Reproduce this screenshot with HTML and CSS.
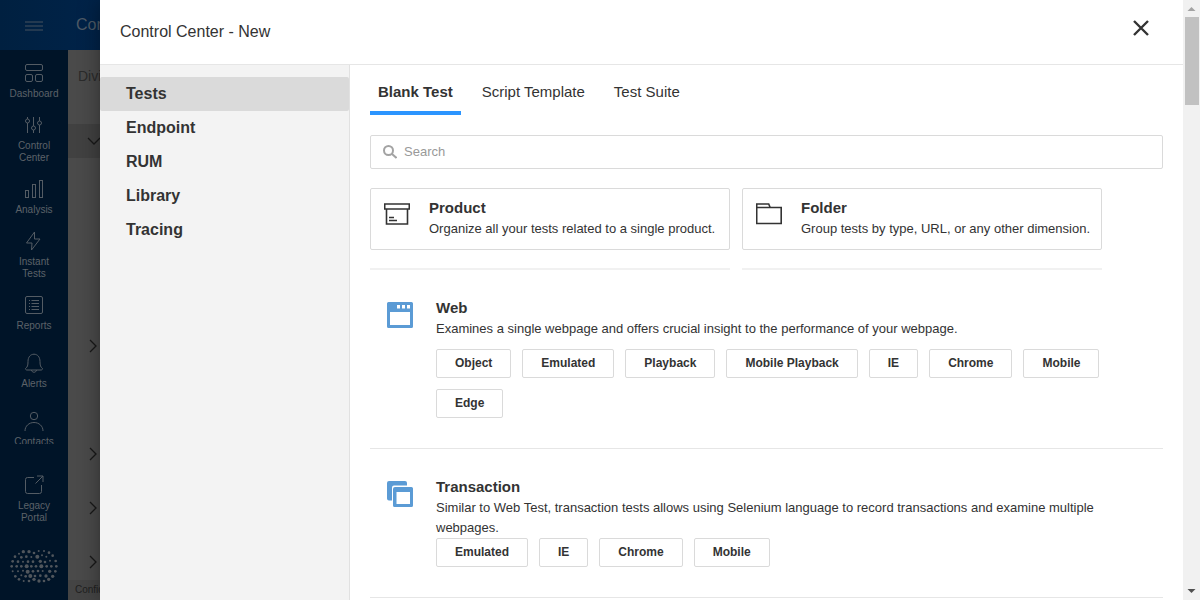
FILE: index.html
```
<!DOCTYPE html>
<html lang="en">
<head>
<meta charset="utf-8">
<title>Control Center - New</title>
<link rel="stylesheet" href="styles.css">
</head>
<body>
<div class="app">
  <header class="topbar">
    <button class="menu" type="button" aria-label="Menu">
      <svg width="18" height="12" viewBox="0 0 18 12"><path d="M0 2h18M0 6h18M0 10h18" /></svg>
    </button>
    <span class="topbar-title">Control Center</span>
  </header>
  <div class="app-body">
    <nav class="rail">
      <div class="rail-list">
        <a class="rail-item" href="#"><svg width="20" height="20" viewBox="0 0 20 20"><rect x="1.500" y="1.500" width="17" height="6" rx="1.500"/><rect x="1.500" y="11.500" width="7" height="7" rx="1.500"/><rect x="11.500" y="11.500" width="7" height="7" rx="1.500"/></svg><span>Dashboard</span></a>
        <a class="rail-item" href="#"><svg width="20" height="20" viewBox="0 0 20 20"><path d="M3.500 2v2M3.500 8v10M9.500 2v9M9.500 15v3M15.500 2v4M15.500 10v8"/><circle cx="3.500" cy="6" r="2"/><circle cx="9.500" cy="13" r="2"/><circle cx="15.500" cy="8" r="2"/></svg><span>Control<br>Center</span></a>
        <a class="rail-item" href="#"><svg width="20" height="20" viewBox="0 0 20 20"><rect x="1.500" y="11.500" width="3" height="7"/><rect x="8.500" y="5.500" width="3" height="13"/><rect x="15.500" y="1.500" width="3" height="17"/></svg><span>Analysis</span></a>
        <a class="rail-item" href="#"><svg width="20" height="20" viewBox="0 0 20 20"><path d="M10.500 1 2.500 12H8L7.500 19 16 8H10.500Z"/></svg><span>Instant<br>Tests</span></a>
        <a class="rail-item rail-item-tall" href="#"><svg width="20" height="20" viewBox="0 0 20 20"><rect x="1.500" y="1.500" width="17" height="17" rx="1.500"/><path d="M5 5.500h1M7.500 5.500H15M5 8.500h1M7.500 8.500H15M5 11.500h1M7.500 11.500H15M5 14.500h1M7.500 14.500H15"/></svg><span>Reports</span></a>
        <a class="rail-item rail-item-tall" href="#"><svg width="20" height="20" viewBox="0 0 20 20"><path d="M1.500 15.500c2-1.500 2.500-3 2.500-7C4 4 6.500 1.200 10 1.200S16 4 16 8.500c0 4 .5 5.500 2.500 7 0 1-.5 1.500-1.500 1.500H3c-1 0-1.500-.5-1.500-1.500ZM7.500 17c.3 3 4.700 3 5 0"/></svg><span>Alerts</span></a>
        <a class="rail-item" href="#"><svg width="20" height="20" viewBox="0 0 20 20"><circle cx="10" cy="5" r="3.700"/><path d="M1 20c0-5 4-8.500 9-8.500s9 3.500 9 8.500"/></svg><span>Contacts</span></a>
      </div>
      <a class="rail-item rail-legacy" href="#"><svg width="20" height="20" viewBox="0 0 20 20"><path d="M10 2.500H3.500a2 2 0 0 0-2 2v12a2 2 0 0 0 2 2h12a2 2 0 0 0 2-2V10M11.500 8.500 19 1M13 1h6v6"/></svg><span>Legacy<br>Portal</span></a>
      <svg class="rail-logo" width="48" height="34" viewBox="30 326 144 102">
        <circle cx="70" cy="334" r="5"/><circle cx="87" cy="334" r="5"/><circle cx="102" cy="338" r="4"/><circle cx="116" cy="332" r="3"/><circle cx="132" cy="332" r="3"/><circle cx="147" cy="337" r="4"/>
        <circle cx="57" cy="340" r="3"/><circle cx="45" cy="349" r="4"/><circle cx="64" cy="351" r="4"/><circle cx="79" cy="349" r="4"/><circle cx="94" cy="350" r="3"/><circle cx="112" cy="349" r="6"/><circle cx="126" cy="345" r="3"/><circle cx="139" cy="349" r="3"/><circle cx="158" cy="346" r="4"/>
        <circle cx="38" cy="363" r="4"/><circle cx="54" cy="364" r="4"/><circle cx="69" cy="364" r="3"/><circle cx="84" cy="364" r="4"/><circle cx="99" cy="364" r="4"/><circle cx="121" cy="363" r="5"/><circle cx="135" cy="365" r="4"/><circle cx="150" cy="361" r="3"/><circle cx="167" cy="362" r="4"/>
        <circle cx="35" cy="378" r="4"/><circle cx="50" cy="378" r="4"/><circle cx="64" cy="378" r="4"/><circle cx="80" cy="378" r="6"/><circle cx="94" cy="378" r="4"/><circle cx="108" cy="378" r="4"/><circle cx="124" cy="378" r="6"/><circle cx="140" cy="378" r="4"/><circle cx="154" cy="378" r="4"/><circle cx="169" cy="378" r="4"/>
        <circle cx="38" cy="393" r="3"/><circle cx="54" cy="393" r="3"/><circle cx="69" cy="391" r="3"/><circle cx="83" cy="394" r="6"/><circle cx="99" cy="393" r="4"/><circle cx="114" cy="392" r="4"/><circle cx="128" cy="392" r="3"/><circle cx="149" cy="393" r="5"/><circle cx="166" cy="393" r="4"/>
        <circle cx="46" cy="408" r="4"/><circle cx="64" cy="405" r="3"/><circle cx="77" cy="408" r="4"/><circle cx="91" cy="407" r="6"/><circle cx="105" cy="407" r="4"/><circle cx="121" cy="406" r="4"/><circle cx="138" cy="407" r="5"/><circle cx="158" cy="408" r="5"/>
        <circle cx="57" cy="417" r="4"/><circle cx="71" cy="422" r="3"/><circle cx="87" cy="422" r="4"/><circle cx="102" cy="417" r="5"/><circle cx="117" cy="422" r="5"/><circle cx="132" cy="422" r="4"/><circle cx="146" cy="417" r="5"/>
      </svg>
    </nav>
    <main class="back">
      <div class="back-label">Division</div>
      <div class="back-strip"><svg width="14" height="8" viewBox="0 0 14 8"><path d="m1 1 6 6 6-6"/></svg></div>
      <div class="back-rows">
        <div class="back-row"><svg width="8" height="14" viewBox="0 0 8 14"><path d="m1 1 6 6-6 6"/></svg></div>
        <div class="back-row"></div>
        <div class="back-row"><svg width="8" height="14" viewBox="0 0 8 14"><path d="m1 1 6 6-6 6"/></svg></div>
        <div class="back-row"><svg width="8" height="14" viewBox="0 0 8 14"><path d="m1 1 6 6-6 6"/></svg></div>
        <div class="back-row"><svg width="8" height="14" viewBox="0 0 8 14"><path d="m1 1 6 6-6 6"/></svg></div>
      </div>
      <div class="back-footer">Confidential</div>
    </main>
  </div>
</div>

<section class="drawer" role="dialog" aria-labelledby="drawer-title">
  <div class="drawer-main">
    <header class="drawer-head">
      <h1 id="drawer-title">Control Center - New</h1>
      <button class="close" type="button" aria-label="Close"><svg width="18" height="18" viewBox="0 0 18 18"><path d="m2 2 14 14M16 2 2 16"/></svg></button>
    </header>
    <div class="drawer-body">
      <nav class="side">
        <a class="side-link side-link-active" href="#">Tests</a>
        <a class="side-link" href="#">Endpoint</a>
        <a class="side-link" href="#">RUM</a>
        <a class="side-link" href="#">Library</a>
        <a class="side-link" href="#">Tracing</a>
      </nav>
      <div class="content">
        <div class="tabs" role="tablist">
          <button class="tab tab-active" type="button" role="tab" aria-selected="true">Blank Test</button>
          <button class="tab" type="button" role="tab">Script Template</button>
          <button class="tab" type="button" role="tab">Test Suite</button>
        </div>
        <label class="search">
          <svg width="14" height="14" viewBox="0 0 14 14"><circle cx="5.500" cy="5.500" r="4.500"/><path d="m9 9 4.500 4"/></svg>
          <input type="text" placeholder="Search" aria-label="Search">
        </label>
        <div class="groups">
          <div class="group">
            <a class="card" href="#">
              <svg width="26" height="22" viewBox="0 0 26 22"><path d="M.7 1h24.600v5H.7ZM2.500 6v15h21V6M5 14.500h5M5 17.500h8"/></svg>
              <div><h2>Product</h2><p>Organize all your tests related to a single product.</p></div>
            </a>
          </div>
          <div class="group">
            <a class="card" href="#">
              <svg width="26" height="22" viewBox="0 0 26 22"><path d="M.7 20.500V1h12l1.500 3.500h11v16ZM.7 4.500h13.500"/></svg>
              <div><h2>Folder</h2><p>Group tests by type, URL, or any other dimension.</p></div>
            </a>
          </div>
        </div>
        <section class="type">
          <svg class="type-icon" width="26" height="26" viewBox="0 0 26 26"><path fill-rule="evenodd" d="M1.500 0h23A1.500 1.500 0 0 1 26 1.500v23a1.500 1.500 0 0 1-1.500 1.500h-23A1.500 1.500 0 0 1 0 24.500v-23A1.500 1.500 0 0 1 1.500 0ZM3 10v13h20V10ZM10 3v3.500h3V3ZM15 3v3.500h3V3ZM20 3v3.500h3V3Z"/></svg>
          <div class="type-text">
            <h2>Web</h2>
            <p>Examines a single webpage and offers crucial insight to the performance of your webpage.</p>
            <div class="chips">
              <button class="chip" type="button">Object</button>
              <button class="chip" type="button">Emulated</button>
              <button class="chip" type="button">Playback</button>
              <button class="chip" type="button">Mobile Playback</button>
              <button class="chip" type="button">IE</button>
              <button class="chip" type="button">Chrome</button>
              <button class="chip" type="button">Mobile</button>
              <button class="chip" type="button">Edge</button>
            </div>
          </div>
        </section>
        <section class="type">
          <svg class="type-icon" width="26" height="26" viewBox="0 0 26 26"><path d="M2 0h16a2 2 0 0 1 2 2v2.500H7a2 2 0 0 0-2 2V19.500H2a2 2 0 0 1-2-2V2a2 2 0 0 1 2-2Z"/><path fill-rule="evenodd" d="M8 6h16.500A1.500 1.500 0 0 1 26 7.500v17a1.500 1.500 0 0 1-1.500 1.500h-17A1.500 1.500 0 0 1 6 24.500V8a2 2 0 0 1 2-2ZM9.500 11v12H23V11Z"/></svg>
          <div class="type-text">
            <h2>Transaction</h2>
            <p>Similar to Web Test, transaction tests allows using Selenium language to record transactions and examine multiple webpages.</p>
            <div class="chips">
              <button class="chip" type="button">Emulated</button>
              <button class="chip" type="button">IE</button>
              <button class="chip" type="button">Chrome</button>
              <button class="chip" type="button">Mobile</button>
            </div>
          </div>
        </section>
      </div>
    </div>
  </div>
  <div class="scrollbar" aria-hidden="true">
    <svg class="scroll-up" width="17" height="17" viewBox="0 0 17 17"><path d="M4.500 11h8l-4-4Z"/></svg>
    <div class="scroll-track"><div class="scroll-thumb"></div></div>
    <svg class="scroll-down" width="17" height="17" viewBox="0 0 17 17"><path d="M4.500 6h8l-4 4Z"/></svg>
  </div>
</section>
</body>
</html>
```
FILE: styles.css
```
* { box-sizing: border-box; }
body {
  margin: 0;
  height: 100vh;
  overflow: hidden;
  font-family: "Liberation Sans", Arial, sans-serif;
  color: #333;
}
h1, h2, p { margin: 0; }
a { color: inherit; text-decoration: none; }
button { font-family: inherit; color: inherit; cursor: pointer; }
svg { display: block; flex: none; }

/* Dimmed application behind the drawer */
.app { display: flex; flex-direction: column; height: 100vh; }
.topbar {
  display: flex;
  align-items: center;
  height: 50px;
  flex: none;
  background: linear-gradient(90deg, #002040, #002349 100px);
}
.menu {
  display: flex;
  justify-content: center;
  width: 68px;
  padding: 2px 0 0;
  border: 0;
  background: none;
}
.menu svg { stroke: #46525e; fill: none; }
.topbar-title { width: 24px; margin-left: 8px; overflow: hidden; white-space: nowrap; font-size: 16px; color: #4e5a66; }
.app-body { display: flex; flex: 1; min-height: 0; }
.rail {
  display: flex;
  flex-direction: column;
  width: 68px;
  flex: none;
  background: #001428;
  color: #5c6268;
  font-size: 10px;
  line-height: 12px;
  text-align: center;
}
.rail-list {
  display: flex;
  flex-direction: column;
  height: 394px;
  padding-top: 13px;
  overflow: hidden;
}
.rail-item {
  display: flex;
  flex-direction: column;
  align-items: center;
  flex: none;
  gap: 5px;
  padding-bottom: 15px;
}
.rail-item-tall { padding-bottom: 21px; }
.rail-item svg { fill: none; stroke: #545c64; stroke-width: 1; }
.rail-legacy { margin-top: auto; }
.rail-logo { margin: 10px auto 17px; fill: #50565c; }
.back {
  position: relative;
  display: flex;
  flex-direction: column;
  flex: 1;
  overflow: hidden;
  background: #4a4a4a;
}
.back-label { padding: 18px 10px; font-size: 14px; line-height: 16px; color: #2b2b2b; }
.back-strip { display: flex; align-items: center; height: 34px; margin-top: 22px; padding-left: 19px; background: #414141; }
.back svg { fill: none; stroke: #181818; stroke-width: 1.3; }
.back-rows { padding-top: 161px; }
.back-row { display: flex; align-items: center; height: 54px; padding-left: 21px; }
.back-footer {
  position: absolute;
  inset: auto 0 0;
  padding: 4px 7px;
  font-size: 10px;
  line-height: 12px;
  background: #444;
  color: #202020;
}

/* Drawer */
.drawer {
  position: absolute;
  inset: 0 0 0 100px;
  display: flex;
  background: #fff;
  box-shadow: 0 0 20px rgba(0, 0, 0, .4);
}
.drawer-main { display: flex; flex-direction: column; flex: 1; min-width: 0; }
.drawer-head {
  display: flex;
  align-items: center;
  justify-content: space-between;
  flex: none;
  height: 65px;
  padding: 0 33px 0 20px;
  border-bottom: 1px solid #e6e6e6;
}
.drawer-head h1 { font-size: 16px; font-weight: 400; line-height: 20px; }
.close { padding: 0 0 8px; border: 0; background: none; }
.close svg { fill: none; stroke: #333; stroke-width: 2.4; }
.drawer-body { display: flex; flex: 1; min-height: 0; }
.side {
  width: 250px;
  flex: none;
  padding-top: 12px;
  border-right: 1px solid #e1e1e1;
  background: #f3f3f3;
}
.side-link {
  display: block;
  padding: 0 26px;
  font-size: 16px;
  font-weight: 700;
  line-height: 34px;
}
.side-link-active { background: #dadada; border-radius: 2px; }
.content { flex: 1; min-width: 0; padding: 10px 20px 0; overflow: hidden; }

.tabs { display: flex; gap: 13px; }
.tab {
  height: 40px;
  padding: 0 8px 4px;
  border: 0;
  border-bottom: 4px solid transparent;
  background: none;
  font-size: 15px;
}
.tab-active { border-bottom-color: #2b95ff; font-weight: 700; }
.search {
  display: flex;
  align-items: center;
  gap: 7px;
  height: 34px;
  margin-top: 20px;
  padding: 0 12px;
  border: 1px solid #dadada;
  border-radius: 2px;
}
.search svg { fill: none; stroke: #a3a3a3; stroke-width: 2; }
.search input {
  flex: 1;
  min-width: 0;
  padding: 0 0 2px;
  border: 0;
  outline: 0;
  font: 13px "Liberation Sans", Arial, sans-serif;
  color: #333;
}
.search input::placeholder { color: #999; opacity: 1; }

.groups { display: flex; gap: 12px; margin-top: 19px; }
.group { width: 360px; padding-bottom: 18px; border-bottom: 2px solid #f1f1f1; }
.card {
  display: flex;
  gap: 19px;
  padding: 9px 12px 10px 13px;
  border: 1px solid #dadada;
  border-radius: 2px;
  white-space: nowrap;
}
.card svg { margin-top: 5px; fill: none; stroke: #333; stroke-width: 1.6; }
h2 { font-size: 15px; font-weight: 700; line-height: 20px; }
p { margin-top: 1px; font-size: 13px; line-height: 20px; }

.type {
  display: flex;
  gap: 23px;
  padding: 28px 20px 30px 17px;
  border-bottom: 1px solid #e6e6e6;
}
.type-icon { margin-top: 4px; fill: #5b9bd5; }
.type-text { flex: 1; min-width: 0; }
.type-text p { min-height: 30px; }
.chips { display: flex; flex-wrap: wrap; gap: 11px; }
.chip {
  height: 29px;
  padding: 0 18px 2px;
  border: 1px solid #dadada;
  border-radius: 2px;
  background: #fff;
  font-size: 12px;
  font-weight: 700;
}

.scrollbar { display: flex; flex-direction: column; width: 17px; flex: none; background: #f1f1f1; }
.scroll-up { fill: #a3a3a3; }
.scroll-down { fill: #505050; }
.scroll-track { flex: 1; padding: 0 1px 0 2px; }
.scroll-thumb { height: 88px; background: #c1c1c1; }
```
